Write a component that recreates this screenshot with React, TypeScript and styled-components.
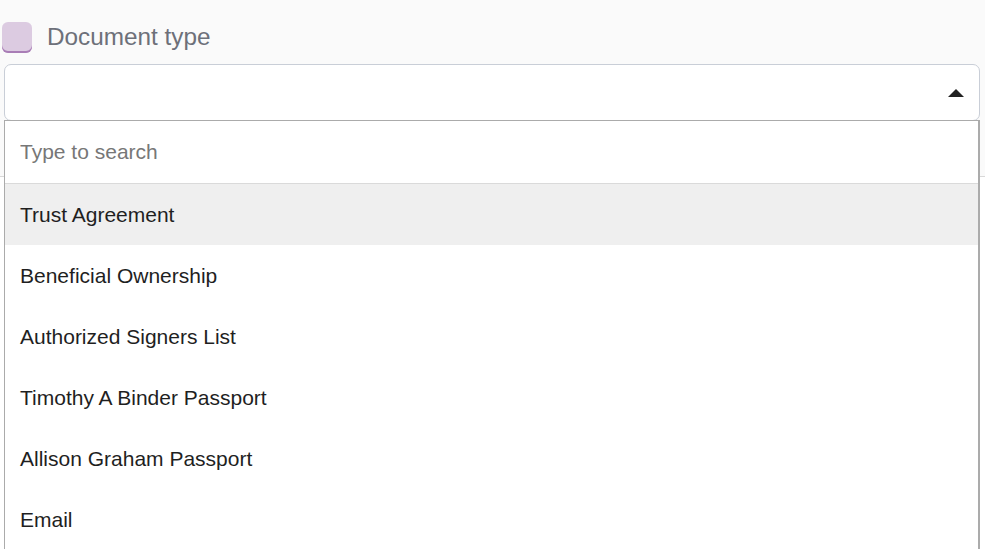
import { useState } from "react";
import styled, { createGlobalStyle } from "styled-components";

const Global = createGlobalStyle`
html, body {
  margin: 0;
  padding: 0;
  background: #fafafa;
  font-family: "Liberation Sans", Arial, sans-serif;
  overflow: hidden;
}
`;

const Page = styled.div`
width: 985px;
height: 549px;
overflow: hidden;
`;

const Field = styled.div`
display: flex;
flex-direction: column;
padding-top: 21px;
`;

const LabelRow = styled.label`
display: flex;
align-items: center;
gap: 15px;
padding-left: 2px;
height: 32px;
`;

const Check = styled.span`
width: 30px;
height: 31px;
box-sizing: border-box;
border-radius: 6px;
background: #dccbe1;
box-shadow: inset 0 -2px 0 #a97db6;
`;

const LabelText = styled.span`
font-size: 24.3px;
color: #6d7079;
margin-top: -1px;
`;

const SelectWrap = styled.div`
position: relative;
margin: 11px 0 0 4px;
width: 976px;
`;

const SelectBox = styled.div`
box-sizing: border-box;
height: 57px;
background: #fff;
border: 1px solid #c9ced7;
border-radius: 7px;
display: flex;
align-items: center;
justify-content: flex-end;
padding-right: 15px;
`;

const Caret = styled.span`
width: 0;
height: 0;
border-left: 8px solid transparent;
border-right: 8px solid transparent;
border-bottom: 8px solid #222;
`;

/* card underneath the open list */
const Panel = styled.div`
margin-top: 55px;
height: 400px;
background: #fff;
border-top: 1px solid #d8d8d8;
`;

const Menu = styled.div`
position: absolute;
top: 56px;
left: 0;
width: 976px;
box-sizing: border-box;
background: #fff;
border: 1px solid #ababab;
border-right-width: 2px;
z-index: 2;
`;

const Search = styled.input`
display: block;
width: 100%;
box-sizing: border-box;
height: 63px;
border: none;
border-bottom: 1px solid #dadada;
padding: 0 15px;
font-family: "Liberation Sans", Arial, sans-serif;
font-size: 21px;
color: #222;
outline: none;
background: #fff;
&::placeholder {
  color: #777;
}
`;

const Option = styled.div<{ active: boolean }>`
height: 61px;
display: flex;
align-items: center;
padding-left: 15px;
font-size: 21px;
color: #1f1f1f;
background: ${(p) => (p.active ? "#efefef" : "#fff")};
cursor: pointer;
`;

const options = [
  "Trust Agreement",
  "Beneficial Ownership",
  "Authorized Signers List",
  "Timothy A Binder Passport",
  "Allison Graham Passport",
  "Email",
];

function App() {
  const [active, setActive] = useState(0);

  return (
    <Page>
      <Global />
      <Field>
        <LabelRow>
          <Check />
          <LabelText>Document type</LabelText>
        </LabelRow>
        <SelectWrap>
          <SelectBox>
            <Caret />
          </SelectBox>
          <Menu>
            <Search placeholder="Type to search" />
            {options.map((o, i) => (
              <Option key={o} active={i === active} onMouseEnter={() => setActive(i)}>
                {o}
              </Option>
            ))}
          </Menu>
        </SelectWrap>
        <Panel />
      </Field>
    </Page>
  );
}

export default App;
